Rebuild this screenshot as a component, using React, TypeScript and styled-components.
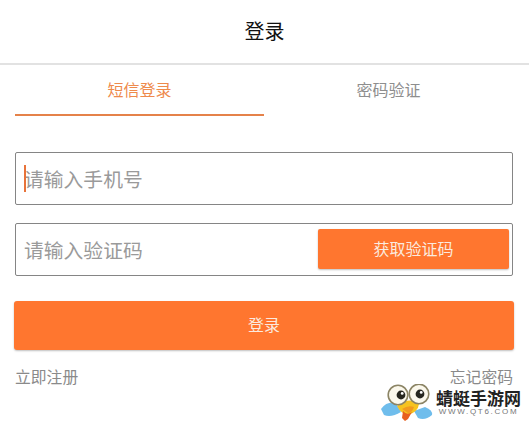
import React, { FC } from "react";
import styled, { createGlobalStyle } from "styled-components";

const GlobalStyle = createGlobalStyle`
    html, body {
        margin: 0;
        padding: 0;
        background: #fff;
    }
    body {
        font-family: "Noto Sans CJK SC", "Noto Sans", sans-serif;
    }
`;

const Mascot: FC = () => (
    <svg width="52" height="38" viewBox="0 0 52 38">
        <path d="M0 25 Q6 17 15 19 L20 28 Q10 34 3 31 Z" fill="#6fbdec" />
        <path d="M33 27 L44 23 Q52 26 51 31 Q44 37 37 34 Z" fill="#6fbdec" />
        <path d="M16 22 Q28 12 38 20 Q37 28 27 31 Q20 30 16 22Z" fill="#f6c320" />
        <circle cx="17" cy="11" r="9.8" fill="#fbf8ec" stroke="#8b8465" strokeWidth="1.6" />
        <circle cx="38" cy="10" r="9.8" fill="#fbf8ec" stroke="#8b8465" strokeWidth="1.6" />
        <circle cx="20" cy="11" r="4.4" fill="#26261f" />
        <circle cx="39" cy="10" r="4.4" fill="#26261f" />
        <circle cx="21.2" cy="9.4" r="1.4" fill="#fff" />
        <circle cx="40.2" cy="8.4" r="1.4" fill="#fff" />
        <path d="M21 25 Q27 21 33 23 Q31 29 27 29 Z" fill="#f29a1f" />
        <path d="M22 27 Q26 32 31 28 L27 35 L24 37 L21 34 Z" fill="#e8601e" />
    </svg>
);

export default function App() {
    return (
        <Page>
            <GlobalStyle />
            <Header>登录</Header>
            <Tabs>
                <Tab $active>短信登录</Tab>
                <Tab>密码验证</Tab>
            </Tabs>
            <Form>
                <Field>
                    <Caret />
                    <Placeholder>请输入手机号</Placeholder>
                </Field>
                <Field>
                    <Placeholder>请输入验证码</Placeholder>
                    <CodeButton>获取验证码</CodeButton>
                </Field>
                <LoginButton>登录</LoginButton>
            </Form>
            <Links>
                <span>立即注册</span>
                <span>忘记密码</span>
            </Links>
            <Watermark>
                <Mascot />
                <WatermarkText>
                    <WatermarkName>蜻蜓手游网</WatermarkName>
                    <WatermarkUrl>WWW.QT6.COM</WatermarkUrl>
                </WatermarkText>
            </Watermark>
        </Page>
    );
}

const Page = styled.div`
    position: relative;
    width: 529px;
    height: 421px;
    overflow: hidden;
    background: #fff;
`;

const Header = styled.div`
    height: 65px;
    box-sizing: border-box;
    padding-bottom: 3px;
    border-bottom: 2px solid #e2e2e2;
    display: flex;
    align-items: center;
    justify-content: center;
    font-size: 20px;
    color: #111;
`;

const Tabs = styled.div`
    display: flex;
    padding: 0 16px 0 15px;
    height: 51px;
`;

const Tab = styled.div<{ $active?: boolean }>`
    flex: 1;
    display: flex;
    align-items: center;
    justify-content: center;
    padding-bottom: 2px;
    box-sizing: border-box;
    font-size: 16px;
    color: ${(p) => (p.$active ? "#ee8a4c" : "#8e8e8e")};
    border-bottom: 2px solid ${(p) => (p.$active ? "#e5824a" : "transparent")};
`;

const Form = styled.div`
    display: flex;
    flex-direction: column;
    padding: 36px 16px 0 15px;
    gap: 18px;
`;

const Field = styled.div`
    position: relative;
    height: 53px;
    box-sizing: border-box;
    border: 1px solid #858585;
    border-radius: 2px;
    display: flex;
    align-items: center;
    justify-content: space-between;
    padding: 0 3px 0 8px;
`;

const Caret = styled.div`
    position: absolute;
    left: 8px;
    top: 12px;
    width: 2px;
    height: 27px;
    background: #e8733a;
`;

const Placeholder = styled.span`
    font-size: 19.8px;
    margin-bottom: 1px;
    color: #9a9a9a;
`;

const CodeButton = styled.div`
    width: 191px;
    height: 40px;
    margin-bottom: 1px;
    padding-bottom: 2px;
    box-sizing: border-box;
    border-radius: 2px;
    background: #ff762f;
    box-shadow: 0 1px 2px rgba(0, 0, 0, 0.25);
    color: #fbeadf;
    font-size: 16px;
    display: flex;
    align-items: center;
    justify-content: center;
`;

const LoginButton = styled.div`
    margin: 7px -1px 0 -1px;
    height: 49px;
    padding-bottom: 3px;
    box-sizing: border-box;
    border-radius: 3px;
    background: #ff762f;
    box-shadow: 0 1px 2px rgba(0, 0, 0, 0.25);
    color: #fbeadf;
    font-size: 16px;
    display: flex;
    align-items: center;
    justify-content: center;
`;

const Links = styled.div`
    display: flex;
    justify-content: space-between;
    padding: 15px 16px 0 15px;
    font-size: 15.8px;
    color: #8a8a8a;
`;

const Watermark = styled.div`
    position: absolute;
    left: 381px;
    top: 384px;
    display: flex;
    align-items: flex-start;
    gap: 3px;
`;

const WatermarkText = styled.div`
    display: flex;
    flex-direction: column;
    align-items: center;
    padding-top: 4px;
`;

const WatermarkName = styled.div`
    font-size: 17px;
    line-height: 19px;
    font-weight: 700;
    color: #222;
`;

const WatermarkUrl = styled.div`
    font-family: "Liberation Sans", sans-serif;
    font-size: 8px;
    line-height: 10px;
    letter-spacing: 1.7px;
    color: #777;
`;
